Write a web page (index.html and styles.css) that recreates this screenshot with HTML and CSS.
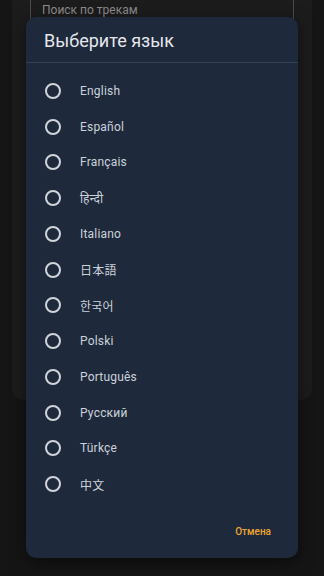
FILE: index.html
```html
<!DOCTYPE html>
<html lang="ru">
<head>
<meta charset="utf-8">
<link rel="stylesheet" href="styles.css">
</head>
<body>
<div class="bg-card">
  <div class="search-field"><span class="search-text">Поиск по трекам</span></div>
</div>
<div class="dialog">
  <div class="dialog-title">Выберите язык</div>
  <div class="divider"></div>
  <ul class="lang-list">
    <li class="lang-item"><span class="radio"></span><span class="label">English</span></li>
    <li class="lang-item"><span class="radio"></span><span class="label">Español</span></li>
    <li class="lang-item"><span class="radio"></span><span class="label">Français</span></li>
    <li class="lang-item"><span class="radio"></span><span class="label">हिन्दी</span></li>
    <li class="lang-item"><span class="radio"></span><span class="label">Italiano</span></li>
    <li class="lang-item"><span class="radio"></span><span class="label">日本語</span></li>
    <li class="lang-item"><span class="radio"></span><span class="label">한국어</span></li>
    <li class="lang-item"><span class="radio"></span><span class="label">Polski</span></li>
    <li class="lang-item"><span class="radio"></span><span class="label">Português</span></li>
    <li class="lang-item"><span class="radio"></span><span class="label">Русский</span></li>
    <li class="lang-item"><span class="radio"></span><span class="label">Türkçe</span></li>
    <li class="lang-item"><span class="radio"></span><span class="label">中文</span></li>
  </ul>
  <div class="actions"><span class="cancel">Отмена</span></div>
</div>
</body>
</html>
```
FILE: styles.css
```css
html, body {
  margin: 0;
  padding: 0;
}
body {
  width: 324px;
  height: 576px;
  background: #151515;
  font-family: Roboto, "Noto Sans", "Noto Sans CJK JP", sans-serif;
  position: relative;
  overflow: hidden;
}
.bg-card {
  display: flow-root;
  margin: 0 12px;
  height: 400px;
  background: #1c1c1c;
  border-radius: 0 0 12px 12px;
  padding: 0 18px;
  box-sizing: border-box;
}
.search-field {
  margin-top: -12px;
  height: 44px;
  border: 1px solid #4b4b4b;
  border-radius: 4px;
  box-sizing: border-box;
  padding: 10px 0 0 11px;
}
.search-text {
  font-size: 12px;
  color: #8c8c8c;
  line-height: 14px;
}
.dialog {
  position: absolute;
  left: 26px;
  top: 17px;
  width: 272px;
  height: 541px;
  background: #1e293b;
  border-radius: 10px;
  box-shadow: 0 4px 16px rgba(0,0,0,0.5);
  display: flex;
  flex-direction: column;
}
.dialog-title {
  height: 45px;
  padding: 0 18px;
  display: flex;
  align-items: center;
  font-size: 18px;
  color: #e5e7eb;
  padding-top: 2px;
  box-sizing: border-box;
}
.divider {
  height: 1px;
  background: #334155;
}
.lang-list {
  list-style: none;
  margin: 0;
  padding: 10px 0 0;
}
.lang-item {
  height: 35.75px;
  display: flex;
  align-items: center;
  padding-left: 19px;
}
.radio {
  width: 16px;
  height: 16px;
  border: 2px solid #d1d5db;
  border-radius: 50%;
  box-sizing: border-box;
  flex: none;
}
.label {
  margin-left: 19px;
  font-size: 12px;
  color: #cbd2da;
  letter-spacing: 0.2px;
}
.actions {
  flex: 1;
  display: flex;
  justify-content: flex-end;
  align-items: center;
  padding-right: 27px;
  padding-top: 2px;
}
.cancel {
  font-size: 10px;
  font-weight: 500;
  color: #f0a530;
  letter-spacing: 0;
}
```
